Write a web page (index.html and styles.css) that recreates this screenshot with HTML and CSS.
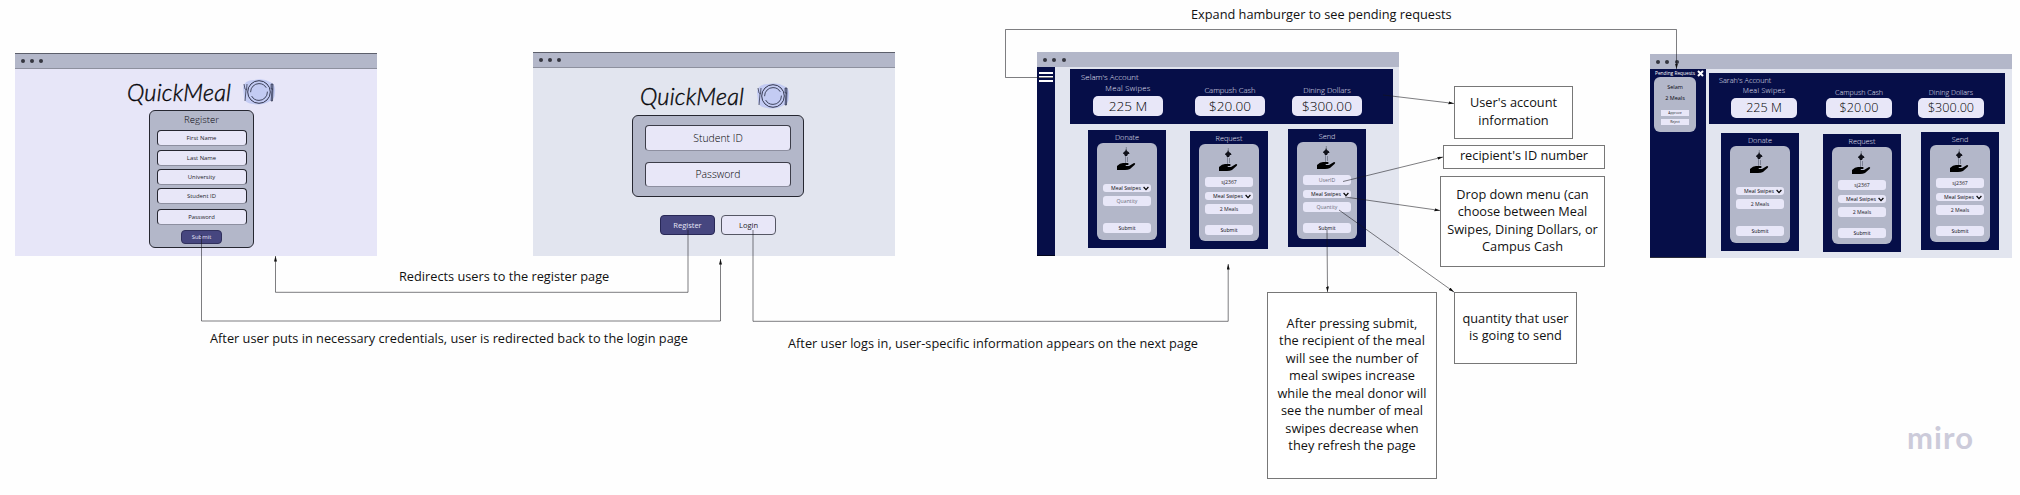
FILE: index.html
```
<!DOCTYPE html>
<html lang="en">
<head>
<meta charset="utf-8">
<title>QuickMeal user flow</title>
<link rel="stylesheet" href="styles.css">
</head>
<body>
<main class="board" id="board"></main>
<script src="board.js"></script>
</body>
</html>
```

FILE: styles.css
```
* { box-sizing: border-box; }
body { margin: 0; background: #fefefe; font-family: "Open Sans", "Noto Sans", sans-serif; color: #111; }
.board { position: relative; width: 2020px; height: 495px; overflow: hidden; }

/* canvas objects */
.frame, .note, .caption, .wires, .brand { position: absolute; }
.frame { width: 362px; display: flex; flex-direction: column; background: #e2e5ef; }
.frame-register { left: 15px; top: 53px; height: 203px; background: #e7e6f8; }
.frame-login { left: 533px; top: 52px; height: 204px; }
.frame-selam { left: 1037px; top: 52px; height: 204px; }
.frame-sarah { left: 1650px; top: 54px; height: 204px; }

.chrome { flex: none; height: 16px; display: flex; align-items: center; gap: 5.4px; padding-left: 5.5px; background: #b3b7c9; }
.chrome i { width: 4px; height: 4px; border-radius: 50%; background: #35363f; }
.chrome.lined { border-top: 1px solid #5c5f6b; border-bottom: 1px solid #8d909e; }
.chrome.thin { height: 15px; padding-left: 6px; }

.logo { display: flex; align-items: center; }
.logo-name { width: 104px; font: italic 300 23.5px/28px Lato, sans-serif; letter-spacing: 0.2px; -webkit-text-stroke: 0.4px #050508; color: #050508; white-space: nowrap; }
.plate { flex: none; width: 34px; height: 26px; }
.frame-register .logo { margin: 9px 0 0 112px; gap: 11px; }
.frame-login .logo { margin: 14px 0 0 107px; gap: 12px; }

.field { display: flex; align-items: center; justify-content: center; background: #e8e7f8; color: #1c1c28; white-space: nowrap; }

.register-card { width: 105px; height: 138px; margin: 4px 0 0 134px; border: 1px solid #262731; border-radius: 6px; background: #b3b7c9; display: flex; flex-direction: column; align-items: center; }
.register-card h2 { margin: 0; font: 300 9.6px/17px "Open Sans", sans-serif; height: 19px; color: #08080f; }
.register-card .field { width: 90px; height: 16px; border: 1px solid #262731; border-bottom-color: #8d8fa0; border-radius: 4px; font-size: 5.9px; margin-bottom: 3px; }
.register-card .field.loose { margin-bottom: 4px; }
.register-card .field.looser { margin-bottom: 5px; }
.register-card .submit { width: 41px; height: 14px; background: #46467f; color: #e8e7f8; border-color: #30305c; margin: 0; }

.login-card { width: 172px; height: 82px; margin: 5px 0 0 99px; padding: 9px 12px; border: 1px solid #262731; border-radius: 6px; background: #b3b7c9; display: flex; flex-direction: column; gap: 11px; }
.login-card .field { height: 26px; border: 1px solid #3c3d49; border-bottom-color: #8d8fa0; border-radius: 4px; font-weight: 300; font-size: 10.4px; color: #000; }
.login-actions { display: flex; gap: 6px; margin: 18px 0 0 127px; }
.login-actions .field { width: 55px; height: 20px; border: 1px solid #555764; border-radius: 4px; font-size: 7.5px; }
.login-actions .primary { background: #46467f; color: #e8e7f8; border-color: #282856; }

/* account dashboards */
.dash { flex: 1; display: flex; }
.rail { width: 18px; background: #060e48; border-bottom: 1px solid #01041c; padding: 5px 2px; display: flex; flex-direction: column; gap: 2px; }
.rail i { width: 14px; height: 2px; background: #fff; }
.pending { width: 56px; background: #060e48; border-bottom: 1px solid #2b2d3b; padding: 0 0 0 4px; }
.pending-head { height: 8px; display: flex; align-items: center; gap: 2px; padding-left: 1px; color: #fff; font-size: 4.8px; white-space: nowrap; }
.pending-head span { width: 40px; }
.pending-head svg { width: 7px; height: 7px; flex: none; }
.pending-card { width: 42px; height: 55px; background: #b3b7c9; border-radius: 6px; padding-top: 5px; display: flex; flex-direction: column; align-items: center; font-size: 5.5px; line-height: 11px; color: #08080f; }
.pending-card .field { width: 28px; height: 6px; font-size: 3.4px; line-height: 6px; margin-bottom: 3px; }
.pending-card .field.first { margin-top: 6px; }

.content { position: relative; flex: 1; }
.banner { background: #060e48; color: #e8e7f8; font-weight: 300; white-space: nowrap; }
.frame-selam .banner { width: 323px; height: 55px; margin: 2px 0 0 15px; }
.frame-sarah .banner { width: 296px; height: 51px; margin: 4px 0 0 3px; }
.owner { font-size: 7.9px; line-height: 12px; padding: 2px 0 0 11px; height: 14px; }
.frame-sarah .owner { font-size: 7.3px; padding: 1px 0 0 10px; height: 12px; }
.balances { display: flex; }
.balance { display: flex; flex-direction: column; align-items: center; font-size: 7.6px; line-height: 10px; }
.balance .label { height: 13px; padding-top: 2px; }
.balance.high .label { padding-top: 0; letter-spacing: 0.3px; }
.balance .field { width: 70px; height: 20px; border-radius: 5px; font-weight: 300; font-size: 13.6px; color: #000; }
.frame-selam .balances { padding-left: 23px; }
.frame-selam .balance + .balance { margin-left: 32px; }
.frame-selam .balance + .balance + .balance { margin-left: 27px; }
.frame-sarah .balances { padding-left: 22px; }
.frame-sarah .balance { font-size: 7.1px; }
.frame-sarah .balance .field { width: 66px; font-size: 12.6px; }
.frame-sarah .balance + .balance { margin-left: 29px; }
.frame-sarah .balance + .balance + .balance { margin-left: 26px; }

.cards { display: flex; align-items: flex-start; }
.frame-selam .cards { margin: 5px 0 0 33px; }
.frame-sarah .cards { margin: 8px 0 0 15px; }
.card { width: 78px; height: 118px; background: #060e48; display: flex; flex-direction: column; align-items: center; }
.card.request { margin: 2px 20px 0 24px; }
.card.donate { margin-top: 1px; }
.card h3 { margin: 0; height: 13px; font: 300 7.3px/15px "Open Sans", sans-serif; color: #e8e7f8; }
.panel { width: 60px; height: 97px; padding-top: 3px; background: #b3b7c9; border-radius: 6px; display: flex; flex-direction: column; align-items: center; }
.hand { width: 20px; height: 26px; margin-right: 2px; }
.panel .field { width: 48px; height: 10px; border-radius: 3px; font-size: 5.2px; }
.panel .field.id { margin-top: 4px; }
.panel .field.hint { color: #6d6e7c; }
.panel .field.select { height: 8px; margin: 5px 0 4px; gap: 2px; padding-left: 6px; font-size: 5.2px; color: #08080f; }
.panel .field.select svg { width: 6px; height: 5px; }
.donate .panel .field.select { margin-top: 12px; }
.panel .field.send { margin-top: 11px; color: #08080f; }
.donate .panel .field.send { margin-top: 17px; }

/* annotations */
.note { display: flex; align-items: center; justify-content: center; text-align: center; border: 1px solid #777; background: #fff; font-size: 12.75px; line-height: 17.5px; white-space: nowrap; }
.note span { position: relative; top: -1px; }
.caption { font-size: 12.75px; line-height: 18px; white-space: nowrap; }
.wires { left: 0; top: 0; width: 2020px; height: 495px; fill: none; stroke: rgba(20,20,25,.55); stroke-width: 1; }
.brand { left: 1907px; top: 418px; font: 700 31px/38px Lato, sans-serif; letter-spacing: 1.1px; color: #cccbda; }
```

FILE: board.js
```
const plate = `<svg class="plate" viewBox="0 0 34 26"><path d="M1 9Q2 1 12 1Q22-1 28 3Q34 5 33 13Q33 21 28 22Q20 27 11 25Q2 24 2 18Z" fill="#c3cbf3"/><g fill="none" stroke="#20243a"><circle cx="17" cy="13" r="11.3" stroke-width=".9"/><circle cx="17" cy="13" r="8.400" stroke-width=".8" stroke-dasharray="22 4"/><path d="M2 5L3 10L4.500 11L5 5M4 11L3 22" stroke-width=".7"/><path d="M29 5V10H31V5ZM30 10L29 22H30.500L31 10" stroke-width=".6" fill="#7a83a8"/></g></svg>`;
const hand = `<svg class="hand" viewBox="0 0 20 26"><g fill="none" stroke="#666b7d" stroke-width=".7"><path d="M10.300 1V5M9.500 10V17M11.500 11V16"/></g><path d="M10 3L11 5Q13.500 6 13.500 8H12L11 10H9L8 8H7Q7 6 9.300 5Z" fill="#10111a"/><path d="M1 20Q4 17 7 17H12Q13.500 18 12 19H9.500L10 20H13L18 17Q20 17 18.500 19L14 23Q12 24 9 24H1Z" fill="#000"/></svg>`;
const chevron = `<svg viewBox="0 0 6 5"><path d="M.6 1L3 3.600L5.400 1" fill="none" stroke="#000" stroke-width="1.2"/></svg>`;
const field = (text, cls = "") => `<div class="field ${cls}">${text}</div>`;
const chrome = cls => `<div class="chrome ${cls}"><i></i><i></i><i></i></div>`;
const logo = `<div class="logo"><span class="logo-name">QuickMeal</span>${plate}</div>`;

const card = (kind, title, id, qty, hint) => `<section class="card ${kind}"><h3>${title}</h3><div class="panel">${hand}${id ? field(id, "id " + (id === "UserID" ? "hint" : "")) : ""}<div class="field select">Meal Swipes${chevron}</div>${field(qty, hint)}${field("Submit", "send")}</div></section>`;

const dash = (name, cards) => `<div class="content"><div class="banner"><div class="owner">${name}'s Account</div><div class="balances">
<div class="balance high"><span class="label">Meal Swipes</span>${field("225 M")}</div>
<div class="balance"><span class="label">Campush Cash</span>${field("$20.00")}</div>
<div class="balance"><span class="label">Dining Dollars</span>${field("$300.00")}</div></div></div>
<div class="cards">${cards}</div></div>`;

const notes = [
  [1454, 86, 119, 53, "User's account<br>information"],
  [1443, 145, 162, 24, "recipient's ID number"],
  [1440, 176, 165, 91, "Drop down menu (can<br>choose between Meal<br>Swipes, Dining Dollars, or<br>Campus Cash"],
  [1454, 292, 123, 72, "quantity that user<br>is going to send"],
  [1267, 292, 170, 187, "After pressing submit,<br>the recipient of the meal<br>will see the number of<br>meal swipes increase<br>while the meal donor will<br>see the number of meal<br>swipes decrease when<br>they refresh the page"]
];
const captions = [
  [1191, 5, "Expand hamburger to see pending requests"],
  [399, 267, "Redirects users to the register page"],
  [210, 329, "After user puts in necessary credentials, user is redirected back to the login page"],
  [788, 334, "After user logs in, user-specific information appears on the next page"]
];
const wires = [
  "M201.500 235V321H720.500V259", "M688 230V292.300H275.500V256", "M753 230V321.300H1228.200V264",
  "M1053 77.500H1005.500V29.500H1676.500V69", "M1383 95L1454 103.500", "M1343 181.500L1443 157",
  "M1345 197L1440 210.500", "M1339 210L1454 292", "M1327 230L1327.500 292"
];

document.getElementById("board").innerHTML = `
<section class="frame frame-register">${chrome("lined")}${logo}
<div class="register-card"><h2>Register</h2>${field("First Name", "loose")}${field("Last Name")}${field("University")}${field("Student ID", "looser")}${field("Password", "looser")}${field("Submit", "submit")}</div></section>
<section class="frame frame-login">${chrome("lined")}${logo}
<div class="login-card">${field("Student ID")}${field("Password")}</div>
<div class="login-actions">${field("Register", "primary")}${field("Login")}</div></section>
<section class="frame frame-selam">${chrome("thin")}<div class="dash"><div class="rail"><i></i><i></i><i></i></div>
${dash("Selam", card("donate", "Donate", "", "Quantity", "hint") + card("request", "Request", "sj2367", "2 Meals", "") + card("", "Send", "UserID", "Quantity", "hint"))}</div></section>
<section class="frame frame-sarah">${chrome("thin")}<div class="dash"><aside class="pending"><div class="pending-head"><span>Pending Requests</span><svg viewBox="0 0 7 7"><path d="M1 1L6 6M6 1L1 6" stroke="#fff" stroke-width="2"/></svg></div>
<div class="pending-card"><span>Selam</span><span>2 Meals</span>${field("Approve", "first")}${field("Reject")}</div></aside>
${dash("Sarah", card("donate", "Donate", "", "2 Meals", "") + card("request", "Request", "sj2367", "2 Meals", "") + card("", "Send", "sj2367", "2 Meals", ""))}</div></section>
${notes.map(([x, y, w, h, t]) => `<div class="note" style="left:${x}px;top:${y}px;width:${w}px;height:${h}px"><span>${t}</span></div>`).join("")}
${captions.map(([x, y, t]) => `<div class="caption" style="left:${x}px;top:${y}px">${t}</div>`).join("")}
<svg class="wires" viewBox="0 0 2020 495"><defs><marker id="tip" markerUnits="userSpaceOnUse" markerWidth="6" markerHeight="4" refX="5.500" refY="1.500" orient="auto"><path d="M0 0L5.500 1.500L0 3Z" fill="#111" stroke="none"/></marker></defs>${wires.map(d => `<path d="${d}" marker-end="url(#tip)"/>`).join("")}</svg>
<div class="brand">miro</div>`;
```
